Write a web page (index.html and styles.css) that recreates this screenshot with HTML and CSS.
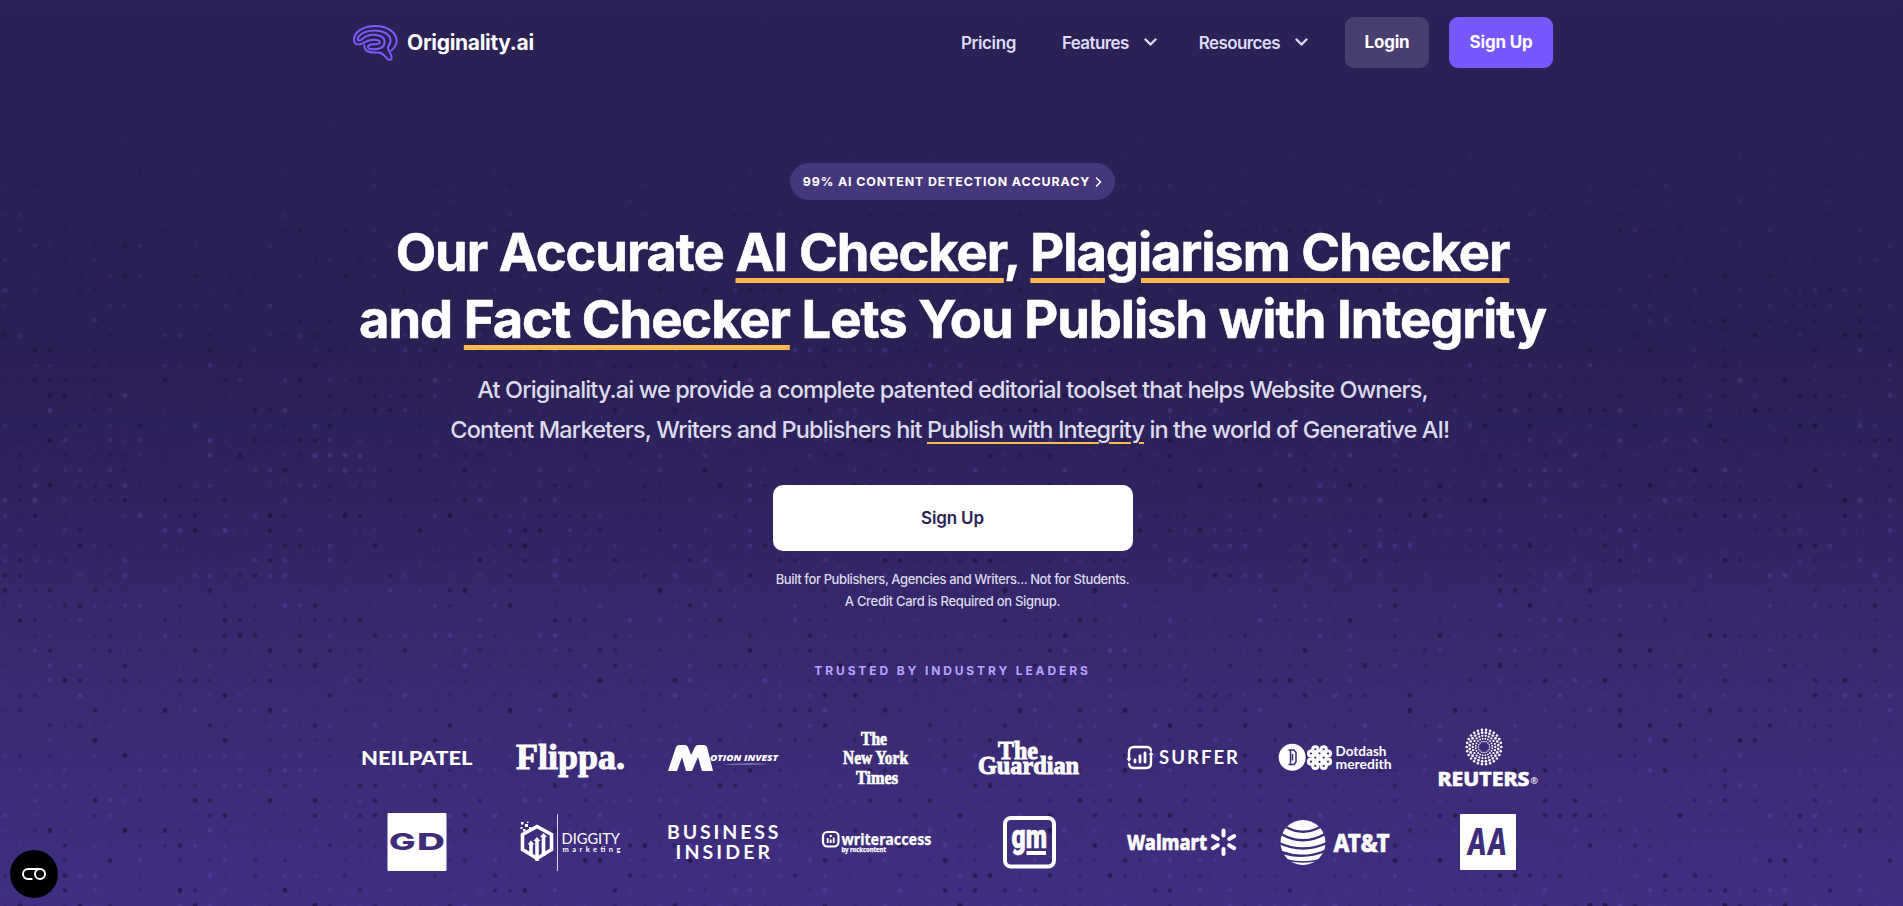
FILE: index.html
```html
<!DOCTYPE html>
<html lang="en">
<head>
<meta charset="utf-8">
<title>Originality.ai</title>
<link rel="stylesheet" href="styles.css">
</head>
<body>
<div class="page">
<svg class="dots" id="dots" aria-hidden="true"></svg>

<header class="header">
  <a class="brand">
    <svg width="45" height="36" viewBox="0 0 45 36" fill="none" stroke="#7b5cff" stroke-width="2" stroke-linecap="round" stroke-linejoin="round">
      <path d="M38.3 25.5C42 22.5 43.8 19 43.6 15.5 43.2 6.500 33.500 1 22.500 1 9.500 1 1 7.500 1 14.800c0 3.200 1.800 4.700 4.600 4.700 5 0 6.200-4.200 13.200-4.600 4-.2 7.600-.1 7.900 1.900.3 2.200-2.200 2.600-6.100 2.500-3.400-.1-5.600 1-5.600 2.700 0 2 2.500 2.200 5.500 2.200 6.200 0 11.100-2.300 11.100-7.500 0-4.700-5.300-7-11.500-7C10.500 9.700 9.800 15.600 6.200 15.500c-1.700 0-1.900-2.100-.7-3.700C8.300 8 14.500 5.500 22 5.500c8.600 0 15.600 4.200 15.600 10.200 0 3.400-2.600 4.300-2.600 7 0 3.400 3.700 6.200 3.700 10.300 0 2.300-2.700 2.300-4 1.100-3.400-3.100-4.500-6.600-9.700-6.500-8.500.2-13.700-.8-13.700-7.300"/>
    </svg>
    <span class="brand-name">Originality.ai</span>
  </a>
  <nav class="nav">
    <a class="nav-link nav-first">Pricing</a>
    <a class="nav-link">Features <svg class="chev" width="13" height="9" viewBox="0 0 13 9"><path d="M1.500 1.500l5 5 5-5"/></svg></a>
    <a class="nav-link">Resources <svg class="chev" width="13" height="9" viewBox="0 0 13 9"><path d="M1.500 1.500l5 5 5-5"/></svg></a>
  </nav>
  <div class="actions">
    <a class="btn btn-login">Login</a>
    <a class="btn btn-signup">Sign Up</a>
  </div>
</header>

<main class="hero">
  <a class="pill"><span>99% AI CONTENT DETECTION ACCURACY</span><svg width="7" height="10" viewBox="0 0 7 10"><path d="M1.500 1l4 4-4 4"/></svg></a>
  <h1 class="title">Our Accurate <a>AI Checker</a>, <a>Plagiarism Checker</a><br>and <a>Fact Checker</a> Lets You Publish with Integrity</h1>
  <p class="lead">At Originality.ai we provide a complete patented editorial toolset that helps Website Owners,<br>Content Marketers, Writers and Publishers hit <a>Publish with Integrity</a> in the world of Generative AI!&nbsp;</p>
  <a class="cta">Sign Up</a>
  <p class="note">Built for Publishers, Agencies and Writers... Not for Students.<br><span class="note-wide">A Credit Card is Required on Signup.</span></p>
  <p class="trusted">TRUSTED BY INDUSTRY LEADERS</p>

  <div class="logos">
    <svg class="logo" viewBox="0 0 120 64"><text class="f-lato" x="5" y="39" font-size="19.5" font-weight="900" textLength="111.500" lengthAdjust="spacingAndGlyphs">NEILPATEL</text></svg>

    <svg class="logo" viewBox="0 0 120 64"><text class="f-serif heavy" x="7" y="42.500" font-size="35" font-weight="700" textLength="109" lengthAdjust="spacingAndGlyphs">Flippa.</text></svg>

    <svg class="logo" viewBox="0 0 120 64">
      <path d="M6 45L14 21q1-2 3-2h6q2 0 3 2l3 8 4-8q1-2 3-2h6q2 0 3 2l6 24H40l-4-14-6 14h-6l-4-14-5 14z"/>
      <text class="f-open" x="48" y="34.500" font-size="9.500" font-weight="800" font-style="italic" textLength="68" lengthAdjust="spacingAndGlyphs">OTION INVEST</text>
      <path d="M60 38.300q25-1.500 48-.3-24 .8-48 .3z" opacity=".6"/>
    </svg>

    <svg class="logo" viewBox="0 0 120 64"><g class="f-black" font-weight="700">
      <text x="46" y="18.500" font-size="18" textLength="26" lengthAdjust="spacingAndGlyphs">The</text>
      <text x="28" y="38" font-size="18" textLength="65" lengthAdjust="spacingAndGlyphs">New York</text>
      <text x="41" y="58" font-size="18" textLength="42" lengthAdjust="spacingAndGlyphs">Times</text></g>
    </svg>

    <svg class="logo" viewBox="0 0 120 64"><g class="f-serif heavy" font-weight="700">
      <text x="30" y="33" font-size="26" textLength="40" lengthAdjust="spacingAndGlyphs">The</text>
      <text x="10" y="47.500" font-size="25" textLength="101" lengthAdjust="spacingAndGlyphs">Guardian</text></g>
    </svg>

    <svg class="logo" viewBox="0 0 120 64">
      <g fill="none" stroke="#fff" stroke-width="2.400" stroke-linecap="round">
        <path d="M8 33v-7q0-5 5-5h12.500q4 0 4.500 3.500"/><path d="M30 30V37q0 5-5 5H13q-4.500 0-5-4"/>
        <path d="M14 34v2M19 30v6M24 27v9" stroke-width="2.800"/>
      </g>
      <path d="M5.500 32.500h5l-2.500 3.500zM27.500 29l2.500-3.500 2.500 3.500z"/>
      <text class="f-lato" x="38" y="38" font-size="18.500" font-weight="700" textLength="79">SURFER</text>
    </svg>

    <svg class="logo" viewBox="0 0 120 64">
      <circle cx="18.200" cy="31.300" r="13.500"/>
      <path d="M14.500 24h5.500l2 2.500v9.500l-2 2.500h-5.500M16.500 24v14.500M18.500 28v6.500" fill="none" stroke="#3b2a75" stroke-width="1.500"/>
      <g id="flower"></g>
      <g class="f-round" font-weight="700">
        <text x="61.500" y="29.500" font-size="13" textLength="51" lengthAdjust="spacingAndGlyphs">Dotdash</text>
        <text x="61.500" y="42.500" font-size="13" textLength="56" lengthAdjust="spacingAndGlyphs">meredith</text>
      </g>
    </svg>

    <svg class="logo" viewBox="0 0 120 64">
      <g id="rings"></g>
      <text class="f-noto firm" x="10.500" y="60" font-size="19.500" font-weight="800" textLength="92" lengthAdjust="spacingAndGlyphs">REUTERS</text>
      <text class="f-noto" x="103.500" y="57.500" font-size="9" font-weight="700">®</text>
    </svg>

    <svg class="logo" viewBox="0 0 120 64">
      <rect x="31.500" y="3" width="59" height="58" rx="1"/>
      <g class="cut f-inter" font-weight="800" font-size="23">
        <text x="33" y="40" textLength="26.500" lengthAdjust="spacingAndGlyphs">G</text>
        <text x="61" y="40" textLength="28" lengthAdjust="spacingAndGlyphs">D</text>
      </g>
    </svg>

    <svg class="logo" viewBox="0 0 120 64">
      <path d="M13.500 24.500L28 16.500 42.500 24.500V39.500L28 48.500 13.500 39.500Z" fill="none" stroke="#fff" stroke-width="3.600"/>
      <path d="M28 29v22M22 33v13M34.500 25v21" stroke="#fff" stroke-width="3.600" fill="none"/>
      <path d="M18.500 34.500l3.500-4 3.500 4zM24.500 31l3.500-4 3.500 4zM31 27l3.500-4 3.500 4z"/>
      <path d="M9 10h11l6 4-14 8h-4z" class="cut"/>
      <path d="M12 12h2.500v2.500H12zM16 14h3v3h-3zM11.500 17h2v2h-2zM14 19h2.500v2.500H14zM20 17h2v2h-2zM18 11.500h1.500V13H18z"/>
      <path d="M48.100 4h.8v57h-.8z"/>
      <text class="f-lato" x="52.500" y="34" font-size="15" textLength="58.500" lengthAdjust="spacingAndGlyphs">DIGGITY</text>
      <text class="f-lato" x="53.500" y="41.500" font-size="7.500" font-weight="700" textLength="58" lengthAdjust="spacing">marketing</text>
    </svg>

    <svg class="logo" viewBox="0 0 120 64"><g class="f-lato" font-size="19.500" font-weight="700">
      <text x="5" y="29" textLength="111.500">BUSINESS</text><text x="13.500" y="49" textLength="94.500">INSIDER</text></g>
    </svg>

    <svg class="logo" viewBox="0 0 120 64">
      <rect x="8" y="22" width="15.500" height="14.500" rx="4.500" fill="none" stroke="#fff" stroke-width="2.200"/>
      <path d="M12.700 28v5M15.700 29.500v3.500M18.700 27.500v5.500" stroke="#fff" stroke-width="1.800"/><circle cx="15.700" cy="26" r="1.200"/>
      <text class="f-noto thin" x="26.500" y="35" font-size="15.500" font-weight="700" textLength="90" lengthAdjust="spacingAndGlyphs">writeraccess</text>
      <text class="f-noto thin" x="26.500" y="42.300" font-size="6.500" font-weight="700" textLength="44.500" lengthAdjust="spacingAndGlyphs">by rockcontent</text>
    </svg>

    <svg class="logo" viewBox="0 0 120 64">
      <rect x="37" y="8" width="49" height="48.500" rx="6" fill="none" stroke="#fff" stroke-width="4"/>
      <text class="f-roboto firm" x="43.500" y="37.500" font-weight="900" font-size="34" textLength="35.500" lengthAdjust="spacingAndGlyphs">gm</text>
      <path d="M58.500 41h19.500v4h-19.500z"/>
    </svg>

    <svg class="logo" viewBox="0 0 120 64">
      <text class="f-noto firm" x="6" y="39.500" font-size="22" font-weight="800" textLength="80" lengthAdjust="spacingAndGlyphs">Walmart</text>
      <g stroke="#fff" stroke-width="4" stroke-linecap="round">
        <path d="M102.500 20.500v5M102.500 39v5M91.800 26l5 3M108.200 35.200l5 3M91.800 38.200l5-3M108.200 29l5-3"/>
      </g>
    </svg>

    <svg class="logo" viewBox="0 0 120 64">
      <circle cx="29" cy="32.500" r="22.500"/>
      <g fill="none" class="cut-line" stroke-width="2.400">
        <path d="M12 17q17 9.500 34 0" /><path d="M7 24q22 12.500 44 0"/><path d="M5 33q24 11 48 0"/><path d="M7 42q22 8 44-1" /><path d="M13 50q16 4 32 0" stroke-width="1.600"/>
      </g>
      <text class="f-noto firm" x="59.500" y="42" font-size="25.500" font-weight="800" textLength="56" lengthAdjust="spacingAndGlyphs">AT&amp;T</text>
    </svg>

    <svg class="logo" viewBox="0 0 120 64">
      <rect x="33" y="4" width="56" height="56" rx="1"/>
      <text class="cut f-inter" x="40" y="45" font-size="37.500" font-weight="800" font-style="italic" textLength="40" lengthAdjust="spacingAndGlyphs">AA</text>
    </svg>
  </div>
</main>

<a class="consent">
  <svg width="26" height="14" viewBox="0 0 26 14" fill="none" stroke="#fff" stroke-width="2"><path d="M11.500 12H7A5 5 0 0 1 7 2h11"/><circle cx="19" cy="7" r="5"/></svg>
</a>
</div>
<script src="main.js"></script>
</body>
</html>
```
FILE: styles.css
```css
* { box-sizing: border-box; }
body { margin: 0; font-family: Inter, "Liberation Sans", sans-serif; color: #fff; }
.page {
  position: relative;
  height: 906px;
  overflow: hidden;
  background: linear-gradient(180deg, #2b2155 0, #2b2054 340px, #30235f 500px, #37286c 620px, #3b2b75 740px, #402e82 906px);
}
.dots { position: absolute; left: 0; top: 0; width: 100%; height: 100%; }

.header {
  position: relative;
  display: flex;
  align-items: center;
  width: 1200px;
  height: 85px;
  margin-left: 353px;
}
.brand { display: flex; align-items: center; gap: 9px; }
.brand-name { font-size: 21px; font-weight: 700; letter-spacing: -0.3px; line-height: 30px; }
.nav { display: flex; align-items: center; gap: 42px; margin-left: auto; margin-right: 37px; }
.nav-link { display: flex; align-items: center; gap: 15px; font-size: 17px; font-weight: 600; letter-spacing: -0.6px; line-height: 24px; color: #dcdcf8; }
.nav-first { margin-right: 4px; letter-spacing: -0.4px; }
.chev path { fill: none; stroke: #dcdcf8; stroke-width: 2.4; stroke-linecap: round; stroke-linejoin: round; }
.actions { display: flex; gap: 20px; }
.btn { height: 51px; border-radius: 9px; font-size: 17px; font-weight: 700; letter-spacing: -0.2px; line-height: 51px; text-align: center; }
.btn-login { width: 84px; background: #493e70; }
.btn-signup { width: 104px; background: #7857ff; }

.hero { position: relative; display: flex; flex-direction: column; align-items: center; padding: 78px 0 0 2px; text-align: center; }
.pill { display: flex; align-items: center; gap: 5px; height: 37px; padding: 0 13px; border-radius: 19px; background: #45377b; font-size: 12.4px; font-weight: 700; letter-spacing: 0.88px; }
.pill svg path { fill: none; stroke: #fff; stroke-width: 1.5; stroke-linecap: round; stroke-linejoin: round; }
.title { margin: 19px 0 0; font-size: 52.5px; font-weight: 700; letter-spacing: -1.08px; word-spacing: 0.4px; line-height: 67px; white-space: nowrap; -webkit-text-stroke: 0.6px #fff; }
.title a { text-decoration: underline 5px #ffb84f; text-underline-offset: 7px; }
.lead { margin: 17px 0 0; font-size: 23.5px; font-weight: 450; letter-spacing: -0.88px; line-height: 40px; color: #dcdbee; white-space: nowrap; }
.lead a { text-decoration: underline 2px #ffb84f; text-underline-offset: 4px; }
.cta { width: 360px; height: 66px; margin-top: 35px; border-radius: 10px; background: #fff; color: #2b2155; font-size: 17px; font-weight: 600; letter-spacing: -0.15px; line-height: 66px; }
.note { margin: 17px 0 0; font-size: 13px; font-weight: 500; letter-spacing: -0.4px; line-height: 22px; color: #dcdbee; }
.note-wide { letter-spacing: -0.3px; }
.trusted { margin: 49px 0 0; font-size: 12px; font-weight: 700; letter-spacing: 2.88px; line-height: 20px; color: #b6a4ff; }

.logos { display: grid; grid-template-columns: repeat(8, 120px); column-gap: 33px; row-gap: 20px; margin: 45px 2px 0 0; }
.logo { display: block; width: 120px; height: 64px; fill: #fff; overflow: visible; }
.f-lato { font-family: Lato, sans-serif; }
.f-inter { font-family: Inter, sans-serif; }
.f-open { font-family: "Open Sans", sans-serif; }
.f-noto { font-family: "Noto Sans", sans-serif; }
.f-roboto { font-family: Roboto, sans-serif; }
.f-round { font-family: Lato, sans-serif; }
.f-serif { font-family: "Liberation Serif", serif; }
.f-black { font-family: "Liberation Serif", serif; stroke: #fff; stroke-width: 0.7; }
.heavy { stroke: #fff; stroke-width: 1; }
.firm { stroke: #fff; stroke-width: 0.6; }
.thin { stroke: #fff; stroke-width: 0.25; }
.cut { fill: #3d2c7a; }
.cut-line { stroke: #3d2c7a; }

.consent { position: absolute; left: 10px; top: 850px; display: flex; align-items: center; justify-content: center; width: 48px; height: 48px; border-radius: 50%; background: #000; }
```
FILE: main.js
```js
const NS = 'http://www.w3.org/2000/svg';

function dot(parent, x, y, r, fill, opacity) {
  const c = document.createElementNS(NS, 'circle');
  c.setAttribute('cx', x);
  c.setAttribute('cy', y);
  c.setAttribute('r', r);
  if (fill) c.setAttribute('fill', fill);
  if (opacity !== undefined) c.setAttribute('opacity', opacity);
  parent.appendChild(c);
}

// Small deterministic generator so the pattern is the same on every load
let seed = 20713;
function rand() {
  seed = (seed * 1103515245 + 12345) % 2147483648;
  return seed / 2147483648;
}

const field = document.getElementById('dots');
const columns = [];
for (let x = 5; x <= 140; x += 15) columns.push(x);
for (let x = 165; x < 1903; x += 15) columns.push(x);
for (let y = 125.5; y < 906; y += 15) {
  const fade = Math.min(1, (y - 90) / 330);
  for (const x of columns) {
    const kind = rand();
    const strength = rand();
    if (kind < 0.2) continue;
    const dark = kind < 0.62;
    const alpha = (dark ? 0.12 + 0.62 * strength * strength : 0.08 + 0.26 * strength * strength) * fade;
    dot(field, x, y, (1.5 + strength * 1).toFixed(2), dark ? '#1a1338' : '#6550c0', alpha.toFixed(2));
  }
}

// Concentric dotted rings
const rings = document.getElementById('rings');
[[5.6, 0.75, 16], [8.4, 0.95, 20], [11.3, 1.15, 22], [14.4, 1.4, 24], [17.3, 1.3, 26]].forEach(([radius, r, n], k) => {
  for (let i = 0; i < n; i++) {
    const a = (i + (k % 2) / 2) * 2 * Math.PI / n;
    dot(rings, 57 + radius * Math.cos(a), 21 + radius * Math.sin(a), r);
  }
});

// Eight overlapping petals around a hub, pierced by small holes
const flower = document.getElementById('flower');
const petals = [[41.3, 23.3], [49.7, 23.3], [54, 27.5], [54, 35.7], [49.7, 39.9], [41.3, 39.9], [37, 35.7], [37, 27.5]];
dot(flower, 45.5, 31.6, 8);
petals.forEach(([x, y]) => dot(flower, x, y, 4.1));
petals.forEach(([x, y]) => dot(flower, x, y, 1.1, '#3b2a75'));
[[45.5, 27.3], [41.3, 31.6], [49.7, 31.6], [45.5, 35.9]].forEach(([x, y]) => dot(flower, x, y, 1.1, '#3b2a75'));
```
